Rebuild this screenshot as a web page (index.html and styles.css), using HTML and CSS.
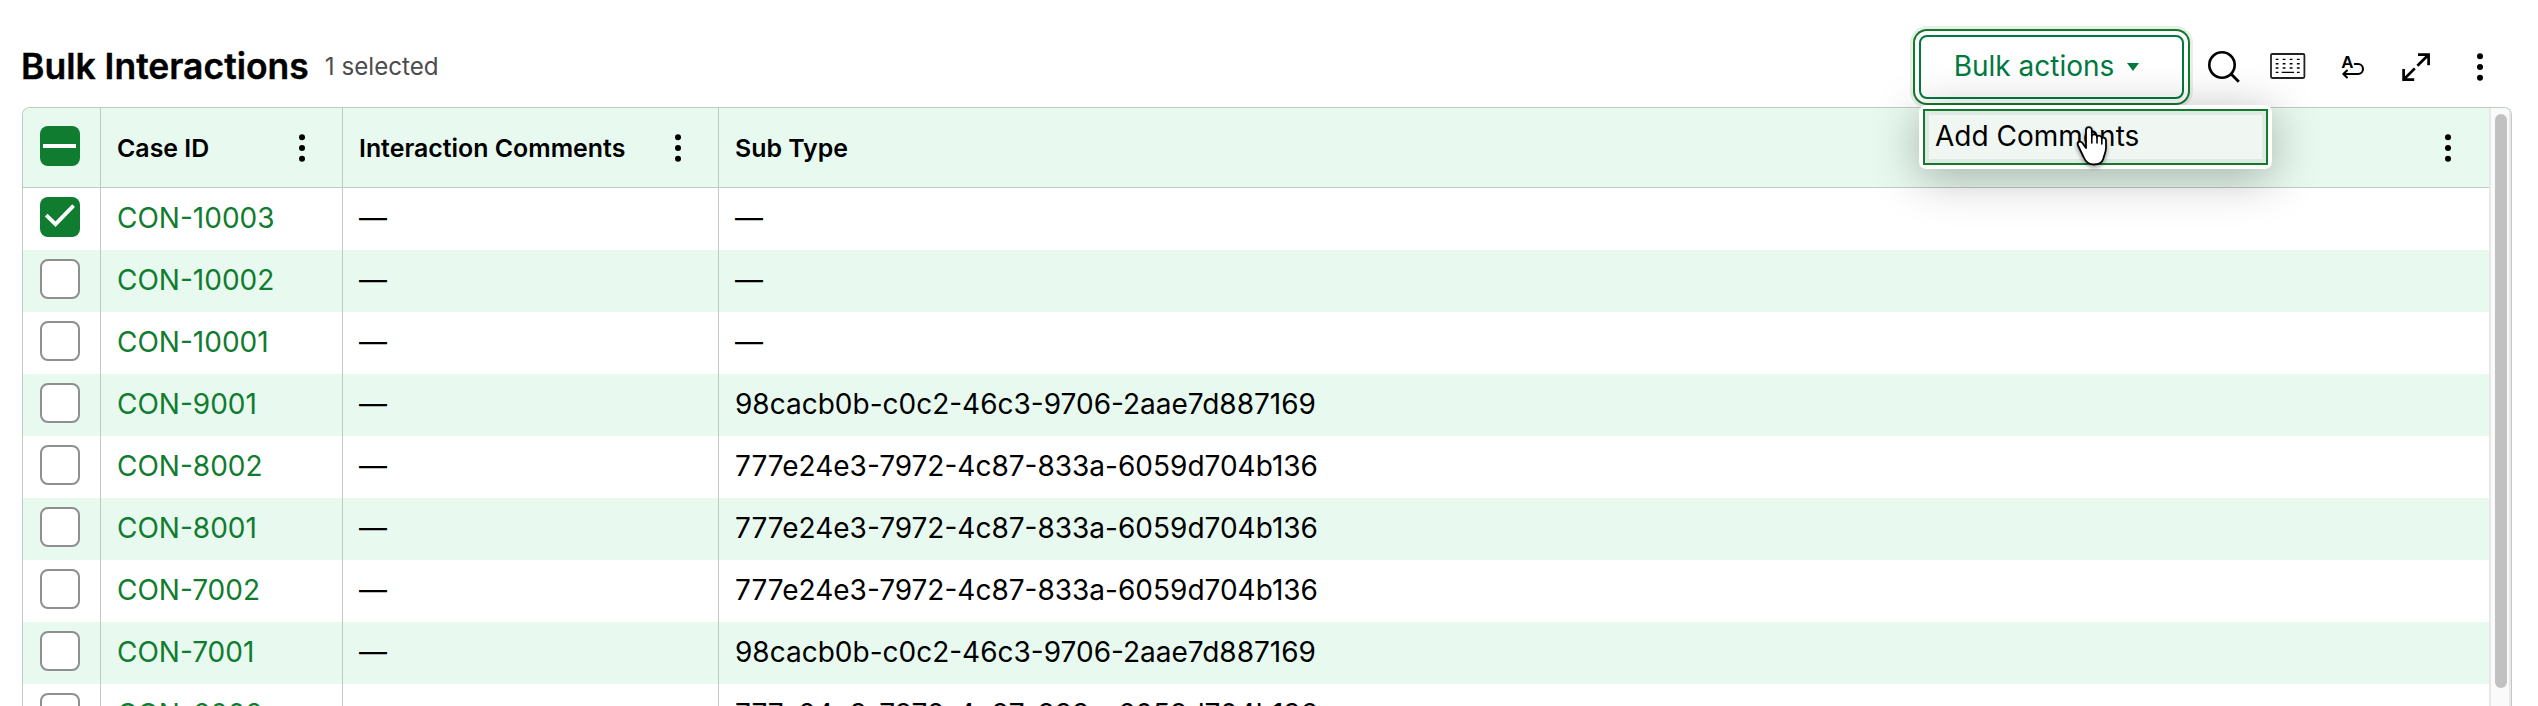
FILE: index.html
```
<!DOCTYPE html>
<html lang="en">
<head>
    <meta charset="UTF-8">
    <meta name="viewport" content="width=device-width, initial-scale=1.0">
    <title>Bulk Interactions</title>
    <link rel="stylesheet" href="styles.css">
</head>
<body>
    <svg class="sprite" aria-hidden="true">
        <symbol id="dots" viewBox="0 0 40 40">
            <circle cx="20" cy="9.3" r="3"/>
            <circle cx="20" cy="20" r="3"/>
            <circle cx="20" cy="30.7" r="3"/>
        </symbol>
    </svg>

    <header class="toolbar">
        <h1>Bulk Interactions</h1>
        <span class="selected-count">1 selected</span>

        <div class="bulk-actions">
            <button type="button" class="bulk-btn">Bulk actions<span class="caret"></span></button>
            <div class="menu">
                <div class="menu-item">
                    Add Comments
                    <svg class="pointer" width="34" height="42" viewBox="0 0 34 42">
                        <path d="M10 18V4.2C10 .2 15.8.2 15.8 4.2V10C16.8 7.6 20.8 7.9 21 10.8C22.4 8.8 25.8 9.6 25.8 12.4C27.4 10.8 30 12 30 14.6V22C30 26 28.2 29 27.2 33C26 37 22 38.5 17.5 38.5C12.5 38.5 9.6 35.5 7.8 31.5L2 19.5C.5 16 4.2 14.2 6.4 17L10 22Z" fill="#fff" stroke="#000" stroke-width="1.8" stroke-linejoin="round"/>
                        <path d="M15.8 9V17M21 10.5V17M25.8 12.5V18" fill="none" stroke="#000" stroke-width="1.6" stroke-linecap="round"/>
                    </svg>
                </div>
            </div>
        </div>

        <button type="button" class="icon-btn" aria-label="Search">
            <svg viewBox="0 0 40 40">
                <circle cx="18" cy="18" r="12.7" fill="none" stroke="#000" stroke-width="2.6"/>
                <path d="M27.3 27.3L34.8 34.8" stroke="#000" stroke-width="2.8"/>
            </svg>
        </button>
        <button type="button" class="icon-btn" aria-label="Keyboard shortcuts">
            <svg viewBox="0 0 40 40" fill="none" stroke="#000">
                <rect x="3" y="7" width="33.4" height="24" rx="1.2" stroke="#222" stroke-width="1.8"/>
                <path d="M7.7 12.4h2.8M14.7 12.4h2.8M21.7 12.4h2.8M28.9 12.4h2.8M7.7 16.7h2.8M14.7 16.7h2.8M21.7 16.7h2.8M28.9 16.7h2.8M7.7 21h2.8M14.7 21h2.8M21.7 21h2.8M28.9 21h2.8M7.7 25.4h2.8M13.7 25.4h12.4M28.9 25.4h2.8" stroke-width="1.4"/>
            </svg>
        </button>
        <button type="button" class="icon-btn" aria-label="Wrap text">
            <svg viewBox="0 0 40 40" fill="none" stroke="#000" stroke-width="2.1" stroke-linecap="round" stroke-linejoin="round">
                <text x="9.2" y="21.4" class="wrap-letter">A</text>
                <path d="M22.8 17H26a5 5 0 0 1 0 10H11.5M15 23.6L11.3 27L15 30.4"/>
            </svg>
        </button>
        <button type="button" class="icon-btn" aria-label="Expand">
            <svg viewBox="0 0 40 40" fill="none" stroke="#000" stroke-width="2.7">
                <path d="M22 7.6H32.6V18.2M32.2 8L21.4 18.8M7.6 22V32.6H18.2M8 32.2L18.8 21.4"/>
            </svg>
        </button>
        <button type="button" class="icon-btn" aria-label="More">
            <svg><use href="#dots"/></svg>
        </button>
    </header>

    <div class="grid">
        <table>
            <colgroup>
                <col class="col-check">
                <col class="col-id">
                <col class="col-comments">
                <col>
            </colgroup>
            <thead>
                <tr>
                    <th>
                        <span class="checkbox checked"><svg viewBox="0 0 40 40"><path d="M3 20H36" stroke-width="4"/></svg></span>
                    </th>
                    <th><div class="head">Case ID<svg><use href="#dots"/></svg></div></th>
                    <th><div class="head">Interaction Comments<svg><use href="#dots"/></svg></div></th>
                    <th><div class="head">Sub Type<svg><use href="#dots"/></svg></div></th>
                </tr>
            </thead>
            <tbody>
                <tr>
                    <td><span class="checkbox checked"><svg viewBox="0 0 40 40"><path d="M6.2 18.2L15.5 27.2L33.6 8.7" stroke-width="3.8"/></svg></span></td>
                    <td><a>CON-10003</a></td>
                    <td>—</td>
                    <td>—</td>
                </tr>
                <tr>
                    <td><span class="checkbox"></span></td>
                    <td><a>CON-10002</a></td>
                    <td>—</td>
                    <td>—</td>
                </tr>
                <tr>
                    <td><span class="checkbox"></span></td>
                    <td><a>CON-10001</a></td>
                    <td>—</td>
                    <td>—</td>
                </tr>
                <tr>
                    <td><span class="checkbox"></span></td>
                    <td><a>CON-9001</a></td>
                    <td>—</td>
                    <td>98cacb0b-c0c2-46c3-9706-2aae7d887169</td>
                </tr>
                <tr>
                    <td><span class="checkbox"></span></td>
                    <td><a>CON-8002</a></td>
                    <td>—</td>
                    <td>777e24e3-7972-4c87-833a-6059d704b136</td>
                </tr>
                <tr>
                    <td><span class="checkbox"></span></td>
                    <td><a>CON-8001</a></td>
                    <td>—</td>
                    <td>777e24e3-7972-4c87-833a-6059d704b136</td>
                </tr>
                <tr>
                    <td><span class="checkbox"></span></td>
                    <td><a>CON-7002</a></td>
                    <td>—</td>
                    <td>777e24e3-7972-4c87-833a-6059d704b136</td>
                </tr>
                <tr>
                    <td><span class="checkbox"></span></td>
                    <td><a>CON-7001</a></td>
                    <td>—</td>
                    <td>98cacb0b-c0c2-46c3-9706-2aae7d887169</td>
                </tr>
                <tr>
                    <td><span class="checkbox"></span></td>
                    <td><a>CON-6002</a></td>
                    <td>—</td>
                    <td>777e24e3-7972-4c87-833a-6059d704b136</td>
                </tr>
            </tbody>
        </table>
        <div class="scrollbar"><div class="thumb"></div></div>
    </div>
</body>
</html>
```
FILE: styles.css
```
* {
    box-sizing: border-box;
    margin: 0;
    padding: 0;
}

body {
    height: 706px;
    overflow: hidden;
    background: #fff;
    font-family: Inter, sans-serif;
    font-size: 28px;
    color: #000;
}

.sprite {
    display: none;
}

/* Toolbar */
.toolbar {
    display: flex;
    align-items: center;
    height: 107px;
    padding: 27px 26px 0 21px;
}

h1 {
    font-size: 35.5px;
    font-weight: 600;
    line-height: 40px;
    -webkit-text-stroke: 0.4px #000;
}

.selected-count {
    margin-left: 16px;
    font-size: 24.2px;
    line-height: 40px;
    color: #4c4c4c;
}

.bulk-actions {
    position: relative;
    margin: 0 8px 0 auto;
}

.bulk-btn {
    display: flex;
    align-items: center;
    justify-content: center;
    width: 265px;
    height: 64px;
    padding: 0 10px 2px 0;
    border: 2px solid #00793f;
    border-radius: 8px;
    background: #fff;
    box-shadow: 0 0 0 4px #fff, 0 0 0 6px #15792c, 0 0 0 9px #e7efe9;
    font: inherit;
    color: #00793f;
}

.caret {
    margin: 2px 0 0 13px;
    border: 6.5px solid transparent;
    border-top: 8px solid #00793f;
    border-bottom: 0;
}

.menu {
    position: absolute;
    top: 70px;
    left: 0;
    z-index: 2;
    width: 353px;
    padding: 4px;
    border-radius: 7px;
    background: #fff;
    box-shadow: 0 8px 48px rgba(0, 0, 0, 0.3);
}

.menu-item {
    position: relative;
    height: 56px;
    padding-left: 12px;
    background: #f0f7f3;
    box-shadow: inset 0 0 0 2px #15792c, inset 0 0 0 6px #dfebe2;
    line-height: 54px;
    white-space: nowrap;
}

.pointer {
    position: absolute;
    top: 17px;
    left: 153px;
    filter: drop-shadow(0 2px 2px rgba(0, 0, 0, 0.4));
}

.icon-btn {
    display: flex;
    justify-content: center;
    width: 64px;
    height: 40px;
    border: none;
    background: none;
}

.icon-btn svg {
    width: 40px;
    height: 40px;
}

.wrap-letter {
    font-size: 17px;
    font-weight: 700;
    fill: #000;
    stroke: none;
}

/* Grid */
.grid {
    display: flex;
    align-items: flex-start;
    width: 2490px;
    height: 599px;
    margin-left: 22px;
    border: 1px solid #bfcac1;
    border-bottom: none;
    border-radius: 8px 8px 0 0;
    overflow: hidden;
}

table {
    width: 2466px;
    table-layout: fixed;
    border-collapse: separate;
    border-spacing: 0;
}

.col-check {
    width: 78px;
}

.col-id {
    width: 242px;
}

.col-comments {
    width: 376px;
}

th,
td {
    padding: 0 16px;
    border-right: 1px solid #bfcac1;
    text-align: left;
    white-space: nowrap;
}

th:last-child,
td:last-child {
    border-right: none;
}

th {
    height: 80px;
    border-bottom: 1px solid #bfcac1;
    background: #e8f9ef;
    font-size: 24.9px;
    font-weight: 600;
}

td {
    height: 62px;
    padding-bottom: 2px;
}

td:first-child {
    padding-bottom: 4px;
}

tr:nth-child(even) td {
    background: #e8f9ef;
}

td a {
    color: #107c2f;
}

.head {
    display: flex;
    align-items: center;
    justify-content: space-between;
}

.head svg {
    width: 40px;
    height: 40px;
    margin-right: 4px;
}

th:last-child svg {
    margin-right: 5px;
}

.checkbox {
    display: block;
    width: 40px;
    height: 40px;
    margin-left: 1px;
    border: 2px solid #8f8f8f;
    border-radius: 8px;
    background: #fff;
}

th .checkbox {
    margin-bottom: 3px;
}

.checkbox.checked {
    border: none;
    background: #107c2f;
}

.checkbox svg {
    display: block;
    fill: none;
    stroke: #fff;
}

.scrollbar {
    flex: 1;
    height: 100%;
    padding: 6px 0 0 4px;
    border: solid #e8e8e8;
    border-width: 0 2px;
    background: #fafafa;
}

.thumb {
    width: 12px;
    height: 574px;
    border-radius: 6px;
    background: #c1c1c1;
}
```
